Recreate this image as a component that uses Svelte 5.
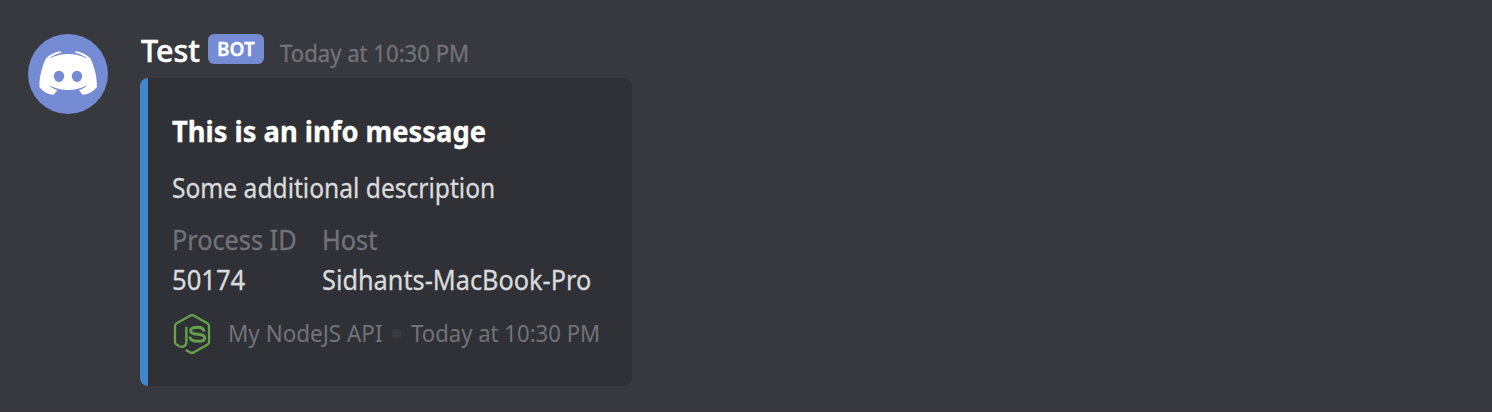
<script>
  const author = { name: 'Test', tag: 'BOT', time: 'Today at 10:30 PM' };
  const embed = {
    title: 'This is an info message',
    description: 'Some additional description',
    fields: [
      { name: 'Process ID', value: '50174', nameWidth: 126, nameScale: 0.902, valueWidth: 75, valueScale: 0.915 },
      { name: 'Host', value: 'Sidhants-MacBook-Pro', nameWidth: 58, nameScale: 0.905, valueWidth: 271, valueScale: 0.903 }
    ],
    footer: 'My NodeJS API',
    time: 'Today at 10:30 PM'
  };
</script>

{#snippet label(text, width, scale)}
  <span class="fit" style:width="{width}px"><span style:transform="scaleX({scale})">{text}</span></span>
{/snippet}

<main class="message">
  <svg class="avatar" viewBox="0 0 240 240" aria-hidden="true">
    <circle cx="120" cy="120" r="120" fill="#758bd3" />
    <g transform="translate(-24 -24)" fill="#fff">
      <path d="M78 97C91 84 106 78 121 76Q124 78 124 80C108 84 96 89 87 98C103 89 124 84 144.500 84C165 84 186 89 202 98C193 89 181 84 165 80Q165 78 168 76C183 78 198 84 211 97C223 122 231 151 231 182C220 196 207 205 188 206L177 193Q193 188 203 177C184 188 164 192 144.500 192C125 192 105 188 86 177Q96 188 112 193L101 206C82 205 69 196 58 182C58 151 66 122 78 97Z" />
      <ellipse cx="117" cy="151" rx="15.500" ry="17" fill="#758bd3" />
      <ellipse cx="171" cy="151" rx="15.500" ry="17" fill="#758bd3" />
    </g>
  </svg>

  <div class="content">
    <header>
      <span class="name">{@render label(author.name, 60, 0.98)}</span>
      <span class="tag">{@render label(author.tag, 39, 0.95)}</span>
      <time>{@render label(author.time, 190, 0.922)}</time>
    </header>

    <article class="embed">
      <h1>{@render label(embed.title, 315, 0.943)}</h1>
      <p>{@render label(embed.description, 326, 0.878)}</p>
      <dl>
        {#each embed.fields as f}
          <div class="field">
            <dt>{@render label(f.name, f.nameWidth, f.nameScale)}</dt>
            <dd>{@render label(f.value, f.valueWidth, f.valueScale)}</dd>
          </div>
        {/each}
      </dl>
      <footer>
        <svg class="node" viewBox="0 0 120 120" fill="none" stroke="#66a14e" stroke-width="7" stroke-linejoin="round" aria-hidden="true">
          <path d="M41 108L54 115Q60 119 66 115L106 92Q111 89 111 84V36Q111 31 106 28L66 5Q60 1 54 5L14 28Q9 31 9 36V84Q9 89 14 92C28 103 43 99 43 85V38" />
          <path stroke-width="9" d="M96 53C95 42 88 40 77 40C63 40 56 43 56 50C56 58 64 60 77 61C91 62 98 64 98 71C98 79 90 82 78 82C62 82 54 78 53 68" />
        </svg>
        <span class="source">{@render label(embed.footer, 155, 0.935)}</span>
        <i></i>
        <span>{@render label(embed.time, 190, 0.922)}</span>
      </footer>
    </article>
  </div>
</main>

<style>
  :global(body) {
    background: #38393f;
  }
  .message {
    box-sizing: border-box;
    display: flex;
    gap: 32px;
    height: 412px;
    padding: 34px 28px 25px;
    border-bottom: 1px solid #38333c;
    font-family: "Noto Sans", "Open Sans", sans-serif;
    font-size: 28px;
    line-height: 36px;
    color: #dadbdc;
    -webkit-text-stroke: 0.3px currentColor;
  }
  .fit {
    display: block;
    white-space: nowrap;
  }
  .fit > span {
    display: block;
    width: max-content;
    transform-origin: 0 0;
  }
  .avatar {
    flex: none;
    width: 80px;
    height: 80px;
  }
  header {
    display: flex;
    align-items: flex-start;
    height: 44px;
  }
  .name {
    padding-left: 1px;
    margin-right: -1px;
    font-size: 31px;
    font-weight: 500;
    line-height: 32px;
    color: #fff;
    -webkit-text-stroke-width: 0.5px;
  }
  .tag {
    box-sizing: border-box;
    width: 56px;
    height: 30px;
    margin-left: 8px;
    padding-left: 9px;
    border-radius: 6px;
    background: #758bd3;
    color: #fff;
    font-size: 20px;
    font-weight: 600;
    line-height: 29px;
  }
  time {
    margin-left: 16px;
    font-size: 24px;
    line-height: 38px;
    color: #727378;
  }
  .embed {
    box-sizing: border-box;
    width: 492px;
    height: 308px;
    padding: 35px 24px 32px;
    border-left: 8px solid #4286cb;
    border-radius: 8px;
    background: #303136;
  }
  h1 {
    margin: 0 0 20px;
    font-size: 29px;
    font-weight: 700;
    line-height: 36px;
    color: #fff;
  }
  p {
    margin: 0 0 16px;
  }
  dl {
    display: flex;
    gap: 24px;
    margin: 0 0 17px;
  }
  dt {
    margin-bottom: 4px;
    color: #727378;
  }
  dd {
    margin: 0;
  }
  footer {
    display: flex;
    height: 40px;
    font-size: 24px;
    line-height: 38px;
    color: #727378;
    -webkit-text-stroke-width: 0;
  }
  .node {
    width: 40px;
    height: 40px;
    margin-right: 16px;
  }
  i {
    width: 9px;
    height: 9px;
    margin: 15px 10px 0 9px;
    border-radius: 2px;
    background: #3a3b41;
  }
</style>
